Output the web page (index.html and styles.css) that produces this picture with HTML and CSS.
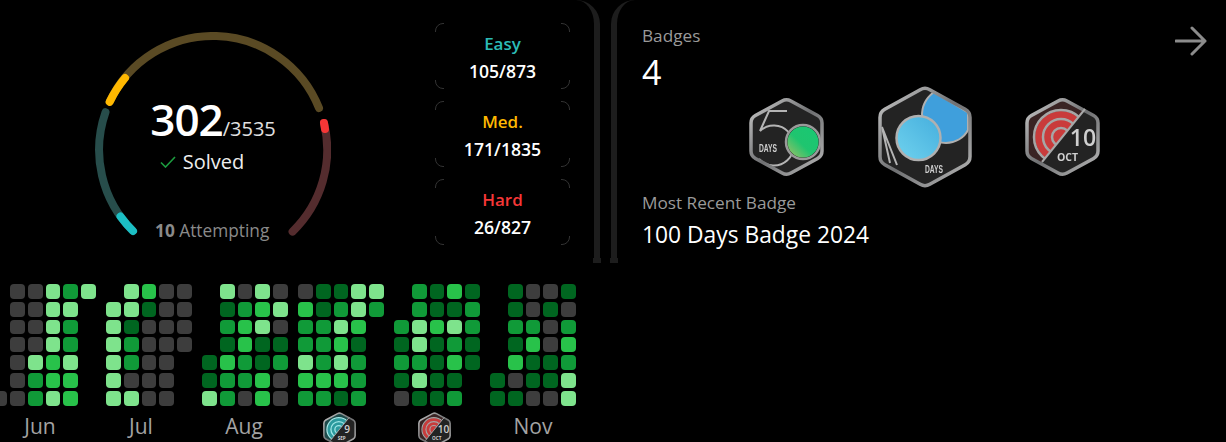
FILE: index.html
```html
<!DOCTYPE html>
<html lang="en">
  <head>
    <meta charset="UTF-8" />
    <meta name="viewport" content="width=device-width, initial-scale=1.0" />
    <title>Profile Progress</title>
    <link rel="stylesheet" href="styles.css">
  </head>
  <body>
    <svg class="svg-defs" aria-hidden="true">
      <defs>
        <linearGradient id="silver" x1="0" y1="0" x2="1" y2="1">
          <stop offset="0" stop-color="#c8c8c8" />
          <stop offset="0.5" stop-color="#6f7072" />
          <stop offset="1" stop-color="#b8b8b8" />
        </linearGradient>
        <linearGradient id="green-fill" x1="1" y1="0" x2="0" y2="1">
          <stop offset="0" stop-color="#18c873" />
          <stop offset="0.55" stop-color="#1fc56f" />
          <stop offset="1" stop-color="#a5bf66" />
        </linearGradient>
        <linearGradient id="blue-fill" x1="1" y1="0" x2="0" y2="1">
          <stop offset="0" stop-color="#45aedd" />
          <stop offset="1" stop-color="#6fd2ee" />
        </linearGradient>
        <clipPath id="hex-half-top">
          <polygon points="0,0 71.4,0 3.2,84 0,84" />
        </clipPath>
        <clipPath id="hex-inner">
          <path d="M33.1 6 Q37.5 3.5 41.9 6 L68.6 20.5 Q73 23 73 28 V56 Q73 61 68.6 63.5 L41.9 78 Q37.5 80.5 33.1 78 L6.4 63.5 Q2 61 2 56 V28 Q2 23 6.4 20.5 Z" />
        </clipPath>
        <path id="hex-small" d="M33.1 6 Q37.5 3.5 41.9 6 L68.6 20.5 Q73 23 73 28 V56 Q73 61 68.6 63.5 L41.9 78 Q37.5 80.5 33.1 78 L6.4 63.5 Q2 61 2 56 V28 Q2 23 6.4 20.5 Z" />
        <path id="hex-large" d="M42.2 4.7 Q47 2 51.8 4.7 L87.2 24.3 Q92 27 92 32.5 V71.5 Q92 77 87.2 79.7 L51.8 99.3 Q47 102 42.2 99.3 L6.8 79.7 Q2 77 2 71.5 V32.5 Q2 27 6.8 24.3 Z" />
      </defs>
    </svg>

    <div class="top-row">
      <div class="card card-left">
        <div class="gauge">
          <svg class="gauge-ring" viewBox="0 0 236 236">
            <path class="arc arc-easy-track" d="M10.5 80.2 A114 114 0 0 0 38 199" />
            <path class="arc arc-easy" d="M38 199 A114 114 0 0 1 25.5 184.5" />
            <path class="arc arc-med-track" d="M14.7 69.8 A114 114 0 0 1 224 76" />
            <path class="arc arc-med" d="M14.7 69.8 A114 114 0 0 1 30 46" />
            <path class="arc arc-hard-track" d="M229 91 A114 114 0 0 1 197.6 199.6" />
            <path class="arc arc-hard" d="M229 91 A114 114 0 0 1 230 97" />
          </svg>
          <div class="gauge-total"><span class="gauge-solved">302</span><span class="gauge-all">/3535</span></div>
          <div class="gauge-label">
            <svg class="check" viewBox="0 0 16 12"><path d="M1 6.5 L5.5 11 L15 1" /></svg>
            <span>Solved</span>
          </div>
          <div class="gauge-attempting"><b>10</b> Attempting</div>
        </div>
        <div class="stats">
          <div class="stat"><span class="stat-name easy">Easy</span><span class="stat-value">105/873</span></div>
          <div class="stat"><span class="stat-name med">Med.</span><span class="stat-value">171/1835</span></div>
          <div class="stat"><span class="stat-name hard">Hard</span><span class="stat-value">26/827</span></div>
        </div>
      </div>

      <div class="card card-right">
        <div class="badges-head">
          <div>
            <div class="muted">Badges</div>
            <div class="badges-count">4</div>
          </div>
          <svg class="arrow" viewBox="0 0 32 30"><path d="M1 15 H30 M17 2 L30 15 L17 28" /></svg>
        </div>
        <div class="badges-row">
          <div class="badge-slot">
            <svg class="badge" viewBox="0 0 75 84">
              <use href="#hex-small" class="hex-body" />
              <path class="five" d="M38 16 H20 L11 36 A20 20 0 1 1 10 64" />
              <circle class="ring-fill" cx="54" cy="47" r="17" />
              <circle class="green-disc" cx="54" cy="47" r="15.5" />
              <use href="#hex-small" class="hex-edge" />
              <text class="days" x="10" y="57" textLength="18" lengthAdjust="spacingAndGlyphs">DAYS</text>
            </svg>
          </div>
          <div class="badge-slot">
            <svg class="badge badge-big" viewBox="0 0 94 104">
              <use href="#hex-large" class="hex-body" />
              <path class="blue-drop" d="M56 7 C48 13 43.5 22 44 32 C44.5 47 56 58 68 58 C77 58 86 53 90 45 V27.5 Z" />
              <circle class="blue-disc" cx="40.5" cy="53" r="22" />
              <path class="one" d="M4 42 L19 80 M4 42 L12 78" />
              <use href="#hex-large" class="hex-edge" />
              <text class="days" x="47" y="88" textLength="18" lengthAdjust="spacingAndGlyphs">DAYS</text>
            </svg>
          </div>
          <div class="badge-slot">
            <svg class="badge" viewBox="0 0 75 84">
              <g id="badge-oct">
                <use href="#hex-small" class="hex-body" />
                <g clip-path="url(#hex-half-top)">
                  <g clip-path="url(#hex-inner)">
                    <rect class="oct-back" width="75" height="84" />
                    <circle class="oct-band" cx="36" cy="42" r="26" />
                    <circle class="oct-ring" cx="36" cy="42" r="27" />
                    <circle class="oct-ring" cx="36" cy="42" r="18" />
                    <circle class="oct-ring" cx="36" cy="42" r="9" />
                  </g>
                </g>
                <use href="#hex-small" class="hex-edge" />
                <line class="hex-cut" x1="60" y1="14" x2="17" y2="67" />
                <text class="oct-day" x="58" y="51" text-anchor="middle">10</text>
                <text class="oct-month" x="42.5" y="66" text-anchor="middle">OCT</text>
              </g>
            </svg>
          </div>
        </div>
        <div class="muted recent-label">Most Recent Badge</div>
        <div class="recent-name">100 Days Badge 2024</div>
      </div>
    </div>

    <div class="heatmap">
      <div class="month month-six">
        <i></i><i class="l0"></i><i class="l0"></i><i class="l4"></i><i class="l2"></i><i class="l4"></i>
        <i></i><i class="l0"></i><i class="l0"></i><i class="l4"></i><i class="l4"></i><i></i>
        <i></i><i class="l0"></i><i class="l0"></i><i class="l4"></i><i class="l2"></i><i></i>
        <i></i><i class="l0"></i><i class="l0"></i><i class="l4"></i><i class="l2"></i><i></i>
        <i></i><i class="l0"></i><i class="l4"></i><i class="l3"></i><i class="l4"></i><i></i>
        <i></i><i class="l0"></i><i class="l2"></i><i class="l3"></i><i class="l3"></i><i></i>
        <i class="l0"></i><i class="l0"></i><i class="l2"></i><i class="l4"></i><i class="l3"></i><i></i>
      </div>
      <div class="month">
        <i></i><i class="l4"></i><i class="l3"></i><i class="l0"></i><i class="l0"></i>
        <i class="l4"></i><i class="l4"></i><i class="l1"></i><i class="l0"></i><i class="l0"></i>
        <i class="l4"></i><i class="l1"></i><i class="l0"></i><i class="l0"></i><i class="l0"></i>
        <i class="l4"></i><i class="l2"></i><i class="l0"></i><i class="l0"></i><i class="l0"></i>
        <i class="l4"></i><i class="l2"></i><i class="l0"></i><i class="l0"></i><i></i>
        <i class="l4"></i><i class="l0"></i><i class="l0"></i><i class="l0"></i><i></i>
        <i class="l4"></i><i class="l4"></i><i class="l0"></i><i class="l0"></i><i></i>
      </div>
      <div class="month">
        <i></i><i class="l4"></i><i class="l0"></i><i class="l4"></i><i class="l0"></i>
        <i></i><i class="l1"></i><i class="l2"></i><i class="l3"></i><i class="l4"></i>
        <i></i><i class="l2"></i><i class="l3"></i><i class="l4"></i><i class="l0"></i>
        <i></i><i class="l1"></i><i class="l3"></i><i class="l1"></i><i class="l1"></i>
        <i class="l1"></i><i class="l3"></i><i class="l2"></i><i class="l1"></i><i class="l2"></i>
        <i class="l1"></i><i class="l2"></i><i class="l2"></i><i class="l3"></i><i class="l0"></i>
        <i class="l4"></i><i class="l2"></i><i class="l0"></i><i class="l3"></i><i class="l0"></i>
      </div>
      <div class="month">
        <i class="l0"></i><i class="l1"></i><i class="l1"></i><i class="l4"></i><i class="l4"></i>
        <i class="l3"></i><i class="l1"></i><i class="l2"></i><i class="l4"></i><i class="l2"></i>
        <i class="l2"></i><i class="l2"></i><i class="l4"></i><i class="l3"></i><i></i>
        <i class="l2"></i><i class="l2"></i><i class="l3"></i><i class="l1"></i><i></i>
        <i class="l4"></i><i class="l2"></i><i class="l4"></i><i class="l2"></i><i></i>
        <i class="l3"></i><i class="l3"></i><i class="l3"></i><i class="l2"></i><i></i>
        <i class="l2"></i><i class="l2"></i><i class="l1"></i><i class="l2"></i><i></i>
      </div>
      <div class="month">
        <i></i><i class="l2"></i><i class="l1"></i><i class="l3"></i><i class="l1"></i>
        <i></i><i class="l2"></i><i class="l1"></i><i class="l1"></i><i class="l2"></i>
        <i class="l2"></i><i class="l4"></i><i class="l3"></i><i class="l4"></i><i class="l2"></i>
        <i class="l1"></i><i class="l4"></i><i class="l1"></i><i class="l2"></i><i class="l1"></i>
        <i class="l2"></i><i class="l2"></i><i class="l1"></i><i class="l3"></i><i class="l1"></i>
        <i class="l1"></i><i class="l4"></i><i class="l1"></i><i class="l1"></i><i></i>
        <i class="l0"></i><i class="l1"></i><i class="l1"></i><i class="l2"></i><i></i>
      </div>
      <div class="month">
        <i></i><i class="l1"></i><i class="l0"></i><i class="l0"></i><i class="l1"></i>
        <i></i><i class="l1"></i><i class="l0"></i><i class="l1"></i><i class="l0"></i>
        <i></i><i class="l2"></i><i class="l2"></i><i class="l0"></i><i class="l2"></i>
        <i></i><i class="l1"></i><i class="l3"></i><i class="l0"></i><i class="l3"></i>
        <i></i><i class="l3"></i><i class="l1"></i><i class="l1"></i><i class="l2"></i>
        <i class="l1"></i><i class="l0"></i><i class="l1"></i><i class="l1"></i><i class="l4"></i>
        <i class="l1"></i><i class="l1"></i><i class="l0"></i><i class="l0"></i><i class="l4"></i>
      </div>
    </div>

    <div class="month-labels">
      <span class="label-jun">Jun</span>
      <span class="label-jul">Jul</span>
      <span class="label-aug">Aug</span>
      <span class="label-sep">
        <svg class="badge-mini" viewBox="0 0 75 84">
          <use href="#hex-small" class="hex-body" />
          <g clip-path="url(#hex-half-top)">
            <g clip-path="url(#hex-inner)">
              <rect class="sep-back" width="75" height="84" />
              <circle class="sep-band" cx="36" cy="42" r="26" />
              <circle class="sep-ring" cx="36" cy="42" r="27" />
              <circle class="sep-ring" cx="36" cy="42" r="18" />
              <circle class="sep-ring" cx="36" cy="42" r="9" />
            </g>
          </g>
          <use href="#hex-small" class="hex-edge" />
          <line class="hex-cut" x1="60" y1="14" x2="17" y2="67" />
          <text class="oct-day" x="55" y="51" text-anchor="middle">9</text>
          <text class="oct-month" x="42.5" y="66" text-anchor="middle">SEP</text>
        </svg>
      </span>
      <span class="label-oct"><svg class="badge-mini" viewBox="0 0 75 84"><use href="#badge-oct" /></svg></span>
      <span class="label-nov">Nov</span>
    </div>
  </body>
</html>
```

FILE: styles.css
```css
html,
body {
  height: 442px;
}

body {
  margin: 0;
  overflow: hidden;
  background-color: #000;
  color: #fff;
  font-family: "Open Sans", "Noto Sans", sans-serif;
}

.svg-defs {
  position: absolute;
  width: 0;
  height: 0;
}

.top-row {
  display: flex;
  gap: 11px;
  height: 263px;
}

.card {
  position: relative;
  box-sizing: border-box;
  height: 263px;
  background-color: #000;
}

.card-left {
  display: flex;
  width: 600px;
  padding: 32px 0 0 95px;
  border-right: 6px solid #1d1d1d;
  border-top-right-radius: 24px;
}

.card-right {
  flex-grow: 1;
  padding: 24px 19px 0 25px;
  border-left: 6px solid #1d1d1d;
  border-top-left-radius: 24px;
}

/* little foot under each divider */
.card::after {
  content: "";
  position: absolute;
  bottom: 0;
  width: 8px;
  height: 5px;
  background-color: #1d1d1d;
}

.card-left::after {
  right: -7px;
}

.card-right::after {
  left: -7px;
}

.gauge {
  position: relative;
  display: flex;
  flex-direction: column;
  align-items: center;
  width: 236px;
  height: 236px;
  flex-shrink: 0;
}

.gauge-ring {
  position: absolute;
  top: 0;
  left: 0;
  width: 236px;
  height: 236px;
}

.arc {
  fill: none;
  stroke-width: 8;
  stroke-linecap: round;
}

.arc-easy-track {
  stroke: #274d4b;
}

.arc-easy {
  stroke: #1cbfc4;
}

.arc-med-track {
  stroke: #5a4a24;
}

.arc-med {
  stroke: #ffb800;
}

.arc-hard-track {
  stroke: #542c2e;
}

.arc-hard {
  stroke: #f63636;
}

.gauge-total {
  margin-top: 57px;
  line-height: 60px;
  height: 60px;
  white-space: nowrap;
}

.gauge-solved {
  font-size: 44px;
  font-weight: 600;
  letter-spacing: -1px;
}

.gauge-all {
  font-size: 20px;
  color: #e0e0e0;
}

.gauge-label {
  display: flex;
  align-items: center;
  gap: 7px;
  margin: -2px 22px 0 0;
  font-size: 20px;
  line-height: 30px;
  color: #eee;
}

.check {
  width: 16px;
  height: 12px;
  fill: none;
  stroke: #1c9c3f;
  stroke-width: 1.6;
}

.gauge-attempting {
  position: absolute;
  top: 187px;
  left: 60px;
  font-size: 17.3px;
  line-height: 24px;
  color: #8a8a8a;
  white-space: nowrap;
}

.stats {
  display: flex;
  flex-direction: column;
  gap: 12px;
  width: 135px;
  margin: -9px 0 0 104px;
}

.stat {
  position: relative;
  box-sizing: border-box;
  display: flex;
  flex-direction: column;
  align-items: center;
  height: 66px;
  padding-top: 5px;
  border: 1px solid #333;
  border-radius: 8px;
}

/* only the corners of the box show */
.stat::before,
.stat::after {
  content: "";
  position: absolute;
  background-color: #000;
}

.stat::before {
  top: -1px;
  bottom: -1px;
  left: 8px;
  right: 8px;
}

.stat::after {
  top: 8px;
  bottom: 8px;
  left: -1px;
  right: -1px;
}

.stat-name,
.stat-value {
  position: relative;
  z-index: 1;
  font-weight: 600;
}

.stat-name {
  font-size: 17px;
  line-height: 29px;
}

.stat-value {
  font-size: 17.6px;
  line-height: 27px;
}

.easy {
  color: #2cbbb6;
}

.med {
  color: #ffb800;
}

.hard {
  color: #f63737;
}

.badges-head {
  display: flex;
  justify-content: space-between;
  align-items: flex-start;
}

.muted {
  font-size: 17.2px;
  line-height: 24px;
  color: #9a9a9a;
}

.badges-count {
  font-size: 34px;
  line-height: 48px;
}

.arrow {
  width: 32px;
  height: 30px;
  margin-top: 2px;
  fill: none;
  stroke: #8c8c8c;
  stroke-width: 3;
  stroke-linecap: round;
  stroke-linejoin: round;
}

.badges-row {
  display: flex;
  justify-content: center;
  align-items: center;
  height: 84px;
  margin: -1px 0 12px;
}

.badge-slot {
  display: flex;
  justify-content: center;
  width: 138px;
}

.badge {
  width: 75px;
  height: 84px;
  flex-shrink: 0;
  filter: blur(0.4px);
}

.badge-big {
  width: 94px;
  height: 104px;
}

.hex-body {
  fill: #232323;
}

.hex-edge {
  fill: none;
  stroke: url(#silver);
  stroke-width: 3.5;
}

.hex-cut {
  stroke: #a8a8a8;
  stroke-width: 2;
}

.five,
.one {
  fill: none;
  stroke: #b4b4b4;
  stroke-width: 2;
}

.ring-fill {
  fill: #232323;
  stroke: #9a9a9a;
  stroke-width: 2.5;
}

.green-disc {
  fill: url(#green-fill);
}

.days {
  font-family: "Liberation Sans", sans-serif;
  font-size: 11.5px;
  font-weight: 700;
  fill: #cfcfcf;
}

.blue-drop {
  fill: #3f9fdc;
  stroke: #b0b0b0;
  stroke-width: 2;
}

.blue-disc {
  fill: url(#blue-fill);
  stroke: #b0b0b0;
  stroke-width: 2.5;
}

.oct-back {
  fill: #3a2424;
}

.sep-back {
  fill: #1e4a4a;
}

.oct-band {
  fill: #c93b3b;
}

.sep-band {
  fill: #2c9a9e;
}

.oct-ring {
  fill: none;
  stroke: #a6a6a6;
  stroke-width: 2.5;
}

.sep-ring {
  fill: none;
  stroke: #9fe6e6;
  stroke-width: 3;
}

.oct-day {
  font-size: 23px;
  font-weight: 600;
  fill: #cfcfcf;
}

.oct-month {
  font-size: 10.5px;
  font-weight: 700;
  fill: #cfcfcf;
}

.recent-name {
  margin-top: 6px;
  font-size: 22.8px;
  line-height: 28px;
  color: #fff;
}

.heatmap {
  display: flex;
  gap: 10px;
  margin: 21px 0 0 -7.8px;
}

.month {
  display: grid;
  grid-template-columns: repeat(5, 14.8px);
  grid-auto-rows: 14.8px;
  gap: 3px;
}

.month-six {
  grid-template-columns: repeat(6, 14.8px);
}

.month i {
  border-radius: 4px;
}

.l0 {
  background-color: #3d3d3d;
}

.l1 {
  background-color: #006620;
}

.l2 {
  background-color: #109a38;
}

.l3 {
  background-color: #28c24a;
}

.l4 {
  background-color: #7ee38c;
}

.month-labels {
  display: flex;
  margin-top: 5px;
  height: 30px;
  font-size: 21px;
  line-height: 30px;
  color: #a3a3a3;
}

.month-labels span {
  display: flex;
  justify-content: center;
}

.label-jun {
  width: 80px;
}

.label-jul {
  width: 122px;
}

.label-aug {
  width: 84px;
}

.label-sep {
  width: 106px;
}

.label-oct {
  width: 84px;
}

.label-nov {
  width: 114px;
}

.badge-mini {
  width: 33px;
  height: 37px;
}
```
